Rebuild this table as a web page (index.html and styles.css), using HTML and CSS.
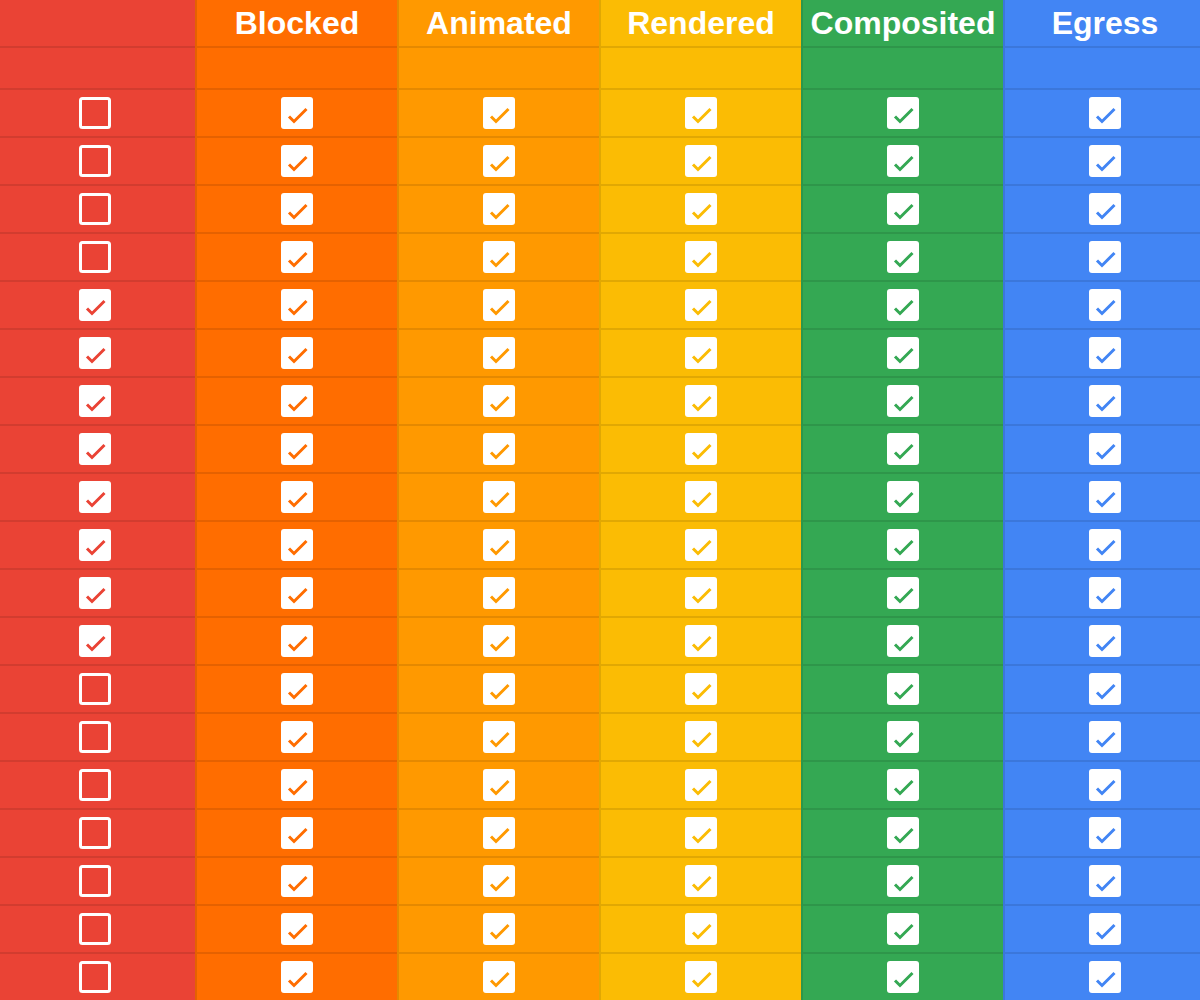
FILE: index.html
```html
<!DOCTYPE html>
<html>
<head>
<meta charset="utf-8">
<link rel="stylesheet" href="styles.css">
</head>
<body>
<div class="board">
  <div class="col red">
    <div class="cell head"></div>
    <div class="cell sub"></div>
    <div class="cell"><svg class="cb" viewBox="0 0 32 32"><rect class="off" x="1.5" y="1.5" width="29" height="29" rx="2"/></svg></div>
    <div class="cell"><svg class="cb" viewBox="0 0 32 32"><rect class="off" x="1.5" y="1.5" width="29" height="29" rx="2"/></svg></div>
    <div class="cell"><svg class="cb" viewBox="0 0 32 32"><rect class="off" x="1.5" y="1.5" width="29" height="29" rx="2"/></svg></div>
    <div class="cell"><svg class="cb" viewBox="0 0 32 32"><rect class="off" x="1.5" y="1.5" width="29" height="29" rx="2"/></svg></div>
    <div class="cell"><svg class="cb" viewBox="0 0 32 32"><rect class="on" width="32" height="32" rx="3"/><path class="tick" d="M8 19.5l5 5 12.5-12.5"/></svg></div>
    <div class="cell"><svg class="cb" viewBox="0 0 32 32"><rect class="on" width="32" height="32" rx="3"/><path class="tick" d="M8 19.5l5 5 12.5-12.5"/></svg></div>
    <div class="cell"><svg class="cb" viewBox="0 0 32 32"><rect class="on" width="32" height="32" rx="3"/><path class="tick" d="M8 19.5l5 5 12.5-12.5"/></svg></div>
    <div class="cell"><svg class="cb" viewBox="0 0 32 32"><rect class="on" width="32" height="32" rx="3"/><path class="tick" d="M8 19.5l5 5 12.5-12.5"/></svg></div>
    <div class="cell"><svg class="cb" viewBox="0 0 32 32"><rect class="on" width="32" height="32" rx="3"/><path class="tick" d="M8 19.5l5 5 12.5-12.5"/></svg></div>
    <div class="cell"><svg class="cb" viewBox="0 0 32 32"><rect class="on" width="32" height="32" rx="3"/><path class="tick" d="M8 19.5l5 5 12.5-12.5"/></svg></div>
    <div class="cell"><svg class="cb" viewBox="0 0 32 32"><rect class="on" width="32" height="32" rx="3"/><path class="tick" d="M8 19.5l5 5 12.5-12.5"/></svg></div>
    <div class="cell"><svg class="cb" viewBox="0 0 32 32"><rect class="on" width="32" height="32" rx="3"/><path class="tick" d="M8 19.5l5 5 12.5-12.5"/></svg></div>
    <div class="cell"><svg class="cb" viewBox="0 0 32 32"><rect class="off" x="1.5" y="1.5" width="29" height="29" rx="2"/></svg></div>
    <div class="cell"><svg class="cb" viewBox="0 0 32 32"><rect class="off" x="1.5" y="1.5" width="29" height="29" rx="2"/></svg></div>
    <div class="cell"><svg class="cb" viewBox="0 0 32 32"><rect class="off" x="1.5" y="1.5" width="29" height="29" rx="2"/></svg></div>
    <div class="cell"><svg class="cb" viewBox="0 0 32 32"><rect class="off" x="1.5" y="1.5" width="29" height="29" rx="2"/></svg></div>
    <div class="cell"><svg class="cb" viewBox="0 0 32 32"><rect class="off" x="1.5" y="1.5" width="29" height="29" rx="2"/></svg></div>
    <div class="cell"><svg class="cb" viewBox="0 0 32 32"><rect class="off" x="1.5" y="1.5" width="29" height="29" rx="2"/></svg></div>
    <div class="cell"><svg class="cb" viewBox="0 0 32 32"><rect class="off" x="1.5" y="1.5" width="29" height="29" rx="2"/></svg></div>
  </div>
  <div class="col orange" id="c-orange">
    <div class="cell head">Blocked</div>
    <div class="cell sub"></div>
  </div>
  <div class="col amber" id="c-amber">
    <div class="cell head">Animated</div>
    <div class="cell sub"></div>
  </div>
  <div class="col yellow" id="c-yellow">
    <div class="cell head">Rendered</div>
    <div class="cell sub"></div>
  </div>
  <div class="col green" id="c-green">
    <div class="cell head">Composited</div>
    <div class="cell sub"></div>
  </div>
  <div class="col blue" id="c-blue">
    <div class="cell head">Egress</div>
    <div class="cell sub"></div>
  </div>
</div>
<script src="script.js"></script>
</body>
</html>
```

FILE: script.js
```js
(function () {
  var ids = ['c-orange', 'c-amber', 'c-yellow', 'c-green', 'c-blue'];
  var markup = '<svg class="cb" viewBox="0 0 32 32"><rect class="on" width="32" height="32" rx="3"/><path class="tick" d="M8 19.5l5 5 12.5-12.5"/></svg>';
  ids.forEach(function (id) {
    var col = document.getElementById(id);
    for (var i = 0; i < 19; i++) {
      var cell = document.createElement('div');
      cell.className = 'cell';
      cell.innerHTML = markup;
      col.appendChild(cell);
    }
  });
})();
```

FILE: styles.css
```css
html, body {
  margin: 0;
  padding: 0;
  overflow: hidden;
}

body {
  font-family: "Liberation Sans", Arial, sans-serif;
  background: #4285F4;
}

.board {
  display: grid;
  grid-template-columns: repeat(6, 202px);
  margin-left: -7px;
  width: 1212px;
}

.col {
  display: flex;
  flex-direction: column;
}

.red { background: #EA4335; color: #EA4335; }
.orange { background: #FF6D00; color: #FF6D00; }
.amber { background: #FF9900; color: #FF9900; }
.yellow { background: #FBBC04; color: #FBBC04; }
.green { background: #34A853; color: #34A853; }
.blue { background: #4285F4; color: #4285F4; }

.cell {
  height: 46px;
  border-left: 2px solid rgba(0, 0, 0, 0.1);
  border-bottom: 2px solid rgba(0, 0, 0, 0.1);
  display: flex;
  align-items: center;
  justify-content: center;
}

.cell.head {
  color: #fff;
  font-size: 32px;
  font-weight: bold;
  white-space: nowrap;
}

.cell.sub {
  height: 40px;
}

.cb {
  width: 32px;
  height: 32px;
  display: block;
}

.cb .on {
  fill: #fff;
}

.cb .off {
  fill: none;
  stroke: #fff;
  stroke-width: 3;
}

.cb .tick {
  fill: none;
  stroke: currentColor;
  stroke-width: 3;
}
```
